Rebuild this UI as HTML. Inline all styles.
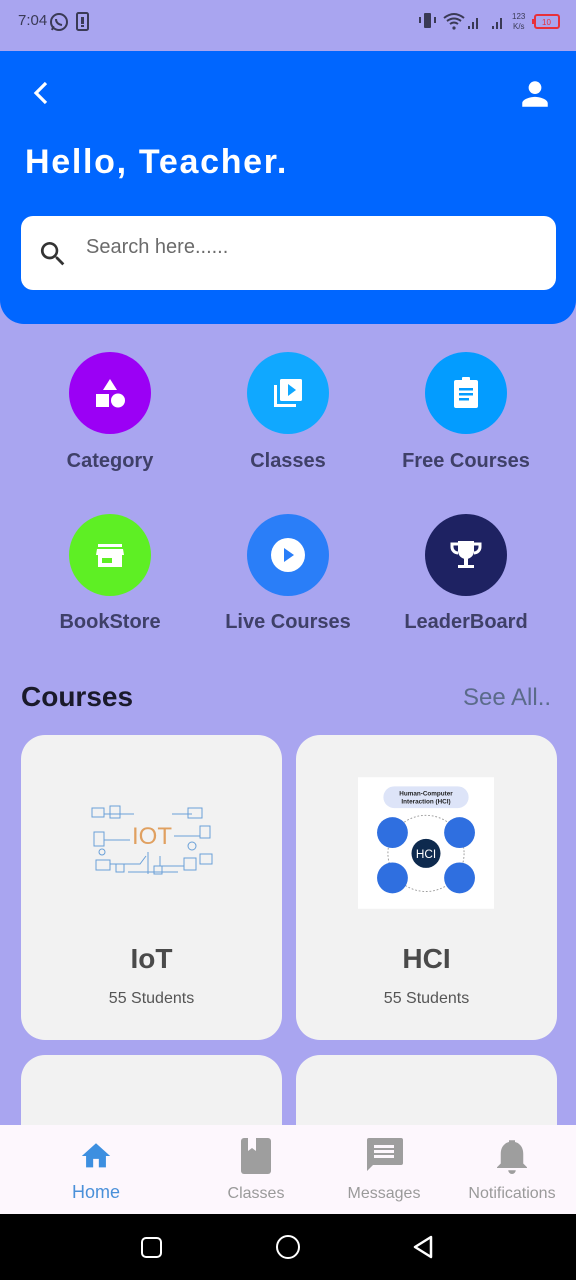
<!DOCTYPE html>
<html><head><meta charset="utf-8"><style>
*{margin:0;padding:0;box-sizing:border-box}
html{width:576px;height:1280px;overflow:hidden}
body{width:576px;height:1280px;background:#a9a5f0;font-family:"Liberation Sans",sans-serif;position:relative;overflow:hidden}
.abs{position:absolute}
.hdr{left:0;top:51px;width:576px;height:273px;background:#0066ff;border-radius:0 0 24px 24px}
.circ{width:82px;height:82px;border-radius:50%;display:flex;align-items:center;justify-content:center}
.lbl{width:190px;text-align:center;font-size:20px;font-weight:bold;color:#3f4068}
.card{background:#f2f2f2;border-radius:24px;width:261px;height:305px}
.ct{position:absolute;width:261px;text-align:center}
.nav{font-size:16px;color:#9a9a9a;text-align:center;width:140px}
</style></head><body>
<div class="abs" style="left:18px;top:12px;font-size:15px;color:#3a3a55">7:04</div>
<svg class="abs" style="left:48px;top:11px" width="22" height="22" viewBox="0 0 22 22"><circle cx="11" cy="11" r="8" fill="none" stroke="#3a3a55" stroke-width="2"/><path d="M4 19l1.5-4" stroke="#3a3a55" stroke-width="2"/><path d="M8 8q0 5 6 6" stroke="#3a3a55" stroke-width="2" fill="none"/></svg>
<svg class="abs" style="left:76px;top:11px" width="14" height="20"><rect x="1" y="2" width="11" height="17" rx="1.5" fill="none" stroke="#3a3a55" stroke-width="2"/><rect x="5" y="6" width="3" height="7" fill="#3a3a55"/><rect x="5" y="14" width="3" height="2" fill="#3a3a55"/></svg>
<svg class="abs" style="left:418px;top:10px" width="145" height="22"><rect x="6" y="3" width="7" height="15" rx="1" fill="#3a3a55"/><rect x="1" y="7" width="2" height="6" fill="#3a3a55"/><rect x="16" y="7" width="2" height="6" fill="#3a3a55"/><path d="M26 8q10-8 20 0M29 11q7-5 14 0M32 14q4-3 8 0" stroke="#3a3a55" stroke-width="2" fill="none"/><circle cx="36" cy="18" r="1.6" fill="#3a3a55"/><rect x="50" y="16" width="2" height="3" fill="#3a3a55"/><rect x="54" y="12" width="2" height="7" fill="#3a3a55"/><rect x="58" y="8" width="2" height="11" fill="#3a3a55"/><rect x="74" y="16" width="2" height="3" fill="#3a3a55"/><rect x="78" y="12" width="2" height="7" fill="#3a3a55"/><rect x="82" y="8" width="2" height="11" fill="#3a3a55"/><text x="94" y="9" font-size="8" fill="#3a3a55">123</text><text x="95" y="19" font-size="8" fill="#3a3a55">K/s</text><rect x="117" y="5" width="24" height="13" rx="2" fill="none" stroke="#e8303a" stroke-width="2"/><rect x="114" y="9" width="2" height="5" fill="#e8303a"/><text x="124" y="15" font-size="8" fill="#e8303a">10</text></svg>
<div class="abs hdr"></div>
<svg class="abs" style="left:30px;top:80px" width="22" height="26"><path d="M16 3L6 13l10 10" stroke="#fff" stroke-width="3.2" fill="none"/></svg>
<svg class="abs" style="left:518px;top:77px" width="34" height="34" viewBox="0 0 24 24"><path fill="#fff" d="M12 12a4.5 4.5 0 1 0 0-9 4.5 4.5 0 0 0 0 9zm0 2c-3 0-9 1.5-9 4.5V21h18v-2.5c0-3-6-4.5-9-4.5z"/></svg>
<div class="abs" style="left:25px;top:143px;font-size:34px;font-weight:bold;color:#fff;letter-spacing:1.7px">Hello, Teacher.</div>
<div class="abs" style="left:21px;top:216px;width:535px;height:74px;background:#fff;border-radius:12px"></div>
<svg class="abs" style="left:37px;top:238px" width="32" height="32" viewBox="0 0 24 24"><path fill="#333" d="M15.5 14h-.8l-.3-.3A6.5 6.5 0 1 0 9.5 16a6.5 6.5 0 0 0 4.2-1.6l.3.3v.8l5 5 1.5-1.5-5-5zm-6 0A4.5 4.5 0 1 1 14 9.5 4.5 4.5 0 0 1 9.5 14z"/></svg>
<div class="abs" style="left:86px;top:236px;font-size:20px;color:#6b6b6b">Search here......</div>
<div class="abs circ" style="left:69px;top:352px;background:#9b00f5"><svg width="40" height="40" viewBox="0 0 40 40"><path d="M20 6l7 11H13z" fill="#fff"/><rect x="6" y="21" width="13" height="13" fill="#fff"/><circle cx="28" cy="27.5" r="7" fill="#fff"/></svg></div>
<div class="abs circ" style="left:247px;top:352px;background:#10a8ff"><svg width="40" height="40" viewBox="0 0 40 40"><path d="M6 12v22h22v-3H9V12z" fill="#fff"/><rect x="12" y="6" width="22" height="22" rx="1.5" fill="#fff"/><path d="M20 11l8 6-8 6z" fill="#10a8ff"/></svg></div>
<div class="abs circ" style="left:425px;top:352px;background:#039cff"><svg width="40" height="40" viewBox="0 0 40 40"><rect x="8" y="7" width="24" height="28" rx="2" fill="#fff"/><rect x="16" y="4" width="8" height="5" rx="1" fill="#fff"/><rect x="13" y="15" width="14" height="2.5" fill="#039cff"/><rect x="13" y="20" width="14" height="2.5" fill="#039cff"/><rect x="13" y="25" width="10" height="2.5" fill="#039cff"/></svg></div>
<div class="abs lbl" style="left:15px;top:450px">Category</div>
<div class="abs lbl" style="left:193px;top:450px">Classes</div>
<div class="abs lbl" style="left:371px;top:450px">Free Courses</div>
<div class="abs circ" style="left:69px;top:514px;background:#5eef24"><svg width="40" height="40" viewBox="0 0 40 40"><rect x="8" y="9" width="24" height="3" fill="#fff"/><path d="M7 14h26l1 6H6z" fill="#fff"/><rect x="8" y="20" width="24" height="12" fill="#fff"/><rect x="12" y="23" width="10" height="5" fill="#5eef24"/></svg></div>
<div class="abs circ" style="left:247px;top:514px;background:#2a7ef8"><svg width="40" height="40" viewBox="0 0 40 40"><circle cx="20" cy="20" r="17" fill="#fff"/><path d="M16 13l10 7-10 7z" fill="#2a7ef8"/></svg></div>
<div class="abs circ" style="left:425px;top:514px;background:#1e2262"><svg width="40" height="40" viewBox="0 0 40 40"><path d="M12 6h16v10a8 8 0 0 1-16 0z" fill="#fff"/><path d="M12 9H6v3a6 6 0 0 0 6 6M28 9h6v3a6 6 0 0 1-6 6" stroke="#fff" stroke-width="3" fill="none"/><rect x="18" y="23" width="4" height="7" fill="#fff"/><rect x="12" y="30" width="16" height="3" fill="#fff"/></svg></div>
<div class="abs lbl" style="left:15px;top:611px">BookStore</div>
<div class="abs lbl" style="left:193px;top:611px">Live Courses</div>
<div class="abs lbl" style="left:371px;top:611px">LeaderBoard</div>
<div class="abs" style="left:21px;top:681px;font-size:28px;font-weight:bold;color:#1a1a2a">Courses</div>
<div class="abs" style="left:463px;top:684px;font-size:24px;color:#5b6b8a">See All..</div>
<div class="abs card" style="left:21px;top:735px">
 <svg class="abs" style="left:67px;top:67px" width="128" height="78" viewBox="0 0 128 78"><g stroke="#6aa0d8" stroke-width="1" fill="none"><rect x="4" y="6" width="12" height="9"/><rect x="22" y="4" width="10" height="12"/><rect x="100" y="6" width="14" height="10"/><rect x="112" y="24" width="10" height="12"/><rect x="6" y="30" width="10" height="14"/><rect x="8" y="58" width="14" height="10"/><rect x="96" y="56" width="12" height="12"/><rect x="112" y="52" width="12" height="10"/><path d="M16 12h30M84 12h20M16 38h26M86 34h26M22 62h30l6 -8M72 54v10h24M60 50v22M40 70h50"/><rect x="28" y="62" width="8" height="8"/><rect x="66" y="64" width="8" height="8"/><circle cx="104" cy="44" r="4"/><circle cx="14" cy="50" r="3"/></g><text x="44" y="42" font-size="24" fill="#e0a060" font-family="Liberation Sans">IOT</text></svg>
 <div class="ct" style="top:208px;font-size:28px;font-weight:bold;color:#4a4a4a">IoT</div>
 <div class="ct" style="top:255px;font-size:16px;color:#555">55 Students</div>
</div>
<div class="abs card" style="left:296px;top:735px">
 <svg class="abs" style="left:62px;top:40px" width="136" height="136" viewBox="0 0 150 145"><rect width="150" height="145" fill="#fff"/><rect x="28" y="10" width="94" height="24" rx="12" fill="#dde4f8"/><text x="75" y="20" font-size="7" text-anchor="middle" fill="#222" font-weight="bold">Human-Computer</text><text x="75" y="29" font-size="7" text-anchor="middle" fill="#222" font-weight="bold">Interaction (HCI)</text><circle cx="75" cy="84" r="42" fill="none" stroke="#999" stroke-dasharray="2 2"/><circle cx="38" cy="61" r="17" fill="#2f6fe0"/><circle cx="112" cy="61" r="17" fill="#2f6fe0"/><circle cx="38" cy="111" r="17" fill="#2f6fe0"/><circle cx="112" cy="111" r="17" fill="#2f6fe0"/><circle cx="75" cy="84" r="16" fill="#0e2a4e"/><text x="75" y="89" font-size="13" fill="#fff" text-anchor="middle">HCI</text></svg>
 <div class="ct" style="top:208px;font-size:28px;font-weight:bold;color:#4a4a4a">HCI</div>
 <div class="ct" style="top:255px;font-size:16px;color:#555">55 Students</div>
</div>
<div class="abs card" style="left:21px;top:1055px;height:100px"></div>
<div class="abs card" style="left:296px;top:1055px;height:100px"></div>
<div class="abs" style="left:0;top:1125px;width:576px;height:89px;background:#fdf7fd"></div>
<svg class="abs" style="left:78px;top:1139px" width="36" height="34" viewBox="0 0 24 24"><path fill="#3d8fe0" d="M10 20v-6h4v6h5v-8h3L12 3 2 12h3v8z"/></svg>
<div class="abs nav" style="left:26px;top:1182px;color:#4a90d9;font-size:18px">Home</div>
<svg class="abs" style="left:240px;top:1137px" width="32" height="38" viewBox="0 0 32 38"><rect x="1" y="1" width="30" height="36" rx="3" fill="#9e9e9e"/><path d="M8 1v13l4-3 4 3V1z" fill="#fdf7fd"/></svg>
<div class="abs nav" style="left:186px;top:1185px">Classes</div>
<svg class="abs" style="left:364px;top:1137px" width="40" height="38" viewBox="0 0 40 38"><path d="M3 1h34a2 2 0 0 1 2 2v23a2 2 0 0 1-2 2H9l-6 6V3a2 2 0 0 1 2-2z" fill="#9e9e9e"/><rect x="10" y="8" width="20" height="3" fill="#fdf7fd"/><rect x="10" y="13" width="20" height="3" fill="#fdf7fd"/><rect x="10" y="18" width="20" height="3" fill="#fdf7fd"/></svg>
<div class="abs nav" style="left:314px;top:1185px">Messages</div>
<svg class="abs" style="left:494px;top:1136px" width="36" height="40" viewBox="0 0 24 26"><path fill="#9e9e9e" d="M12 25a2.5 2.5 0 0 0 2.5-2.5h-5A2.5 2.5 0 0 0 12 25zm7.5-7V11.5c0-3.9-2-7-5.5-7.8V2.5h-4v1.2C6.5 4.5 4.5 7.6 4.5 11.5V18L2 20.5V21h20v-.5z"/></svg>
<div class="abs nav" style="left:442px;top:1185px">Notifications</div>
<div class="abs" style="left:0;top:1214px;width:576px;height:66px;background:#000"></div>
<div class="abs" style="left:141px;top:1237px;width:21px;height:21px;border:2.5px solid #fff;border-radius:5px"></div>
<div class="abs" style="left:276px;top:1235px;width:24px;height:24px;border:2.5px solid #fff;border-radius:50%"></div>
<svg class="abs" style="left:411px;top:1234px" width="26" height="26"><path d="M20 3L4 13l16 10z" fill="none" stroke="#fff" stroke-width="2.5" stroke-linejoin="round"/></svg>
</body></html>
